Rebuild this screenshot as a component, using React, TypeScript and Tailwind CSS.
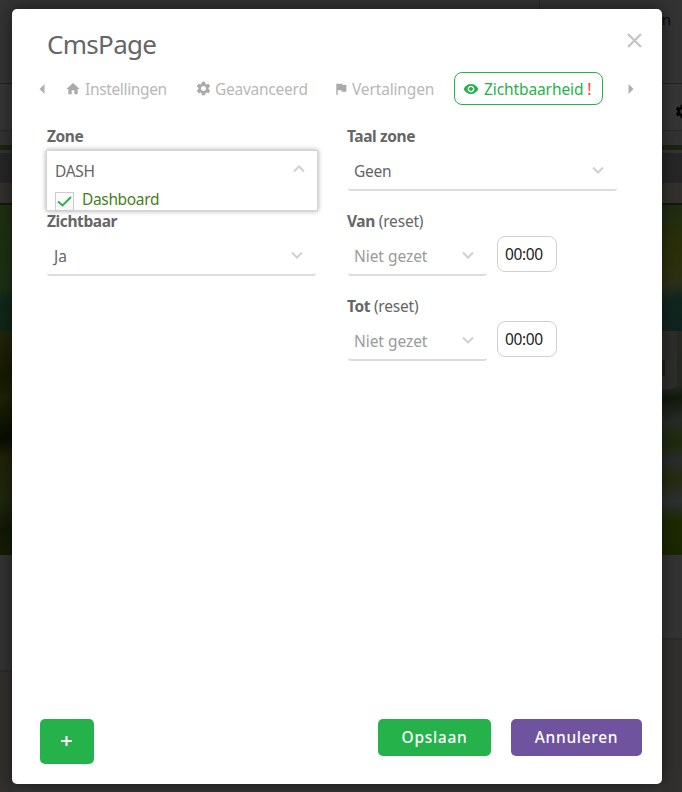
import type { ReactNode } from "react";
import { MdFlag, MdHome, MdRemoveRedEye, MdSettings } from "react-icons/md";

function Chevron({ up = false }: { up?: boolean }) {
  return (
    <svg width="12" height="8" viewBox="0 0 12 8" fill="none" stroke="#d0d0d0" strokeWidth="2">
      <path d={up ? "M1 6.5 6 1.5l5 5" : "M1 1.5l5 5 5-5"} />
    </svg>
  );
}

function Select({ className = "", children }: { className?: string; children: ReactNode }) {
  return (
    <div
      className={`flex h-[41px] items-center justify-between rounded-[3px] border-b-2 border-[#dcdcdc] pr-[13px] pl-[7px] pt-[4px] ${className}`}
    >
      <span>{children}</span>
      <span className="pb-[4px]">
        <Chevron />
      </span>
    </div>
  );
}

function Label({ children, note }: { children: ReactNode; note?: string }) {
  return (
    <div className="h-[24px] text-[15.5px] leading-[22px]">
      <b className="font-bold tracking-[-0.4px]">{children}</b>
      {note && <span className="tracking-[-0.2px]"> {note}</span>}
    </div>
  );
}

function TimeRow({ label }: { label: string }) {
  return (
    <div className="h-[85px]">
      <Label note="(reset)">{label}</Label>
      <div className="flex gap-[10px]">
        <Select className="ml-px mt-[1px] w-[139px] text-[#9b9b9b]">
          <span className="-ml-px tracking-[-0.05px]">Niet gezet</span>
        </Select>
        <div className="mt-[2px] h-9 w-[60px] rounded-lg border border-[#d0d0d0] pl-[7px] text-[15.5px] leading-[35px] tracking-[-0.35px] text-[#222]">
          00:00
        </div>
      </div>
    </div>
  );
}

function Backdrop() {
  return (
    <div className="flex h-full flex-col">
      <div className="flex h-[84px] shrink-0 border-b border-[#222]">
        <div className="w-[540px] border-r border-[#292929]" />
        <div className="flex-1 pt-[8px] pr-[11px] text-right text-[15px] text-[#080810]">n</div>
      </div>
      <div className="flex h-[47px] shrink-0 items-center justify-end overflow-hidden border-b border-[#292929] bg-[#353535]">
        <MdSettings className="mt-[9px] -mr-[9px] size-[17px] shrink-0 text-[#050505]" />
      </div>
      <div className="h-[14px] shrink-0" />
      <div className="h-[5px] shrink-0 bg-[#1b2410]" />
      <div className="h-[3px] shrink-0" />
      <div className="h-[30px] shrink-0 bg-[#262626]" />
      <div className="h-[20px] shrink-0 bg-[#32312e]" />
      <div className="h-[2px] shrink-0 bg-[#10190b]" />
      <div className="flex h-[126px] shrink-0 justify-between">
        <div className="w-3 bg-linear-[165deg,#1f3012_0%,#1c3014_67%,#10281a_74%,#0e2617_100%]" />
        <div className="w-5 bg-linear-[165deg,#1d2c16_0%,#292f0a_28%,#2c300b_45%,#2e3018_62%,#122620_74%,#10241f_100%]" />
      </div>
      <div className="flex h-[224px] shrink-0 justify-between">
        <div className="w-3 bg-linear-[170deg,#25250a_0%,#171a02_20%,#1d2205_30%,#080d03_48%,#202208_56%,#1f260d_75%,#111906_88%,#171d05_100%]" />
        <div className="flex w-5 flex-col items-start bg-linear-[175deg,#292922_0%,#242723_25%,#12190c_30%,#282a27_40%,#1e2a0b_50%,#292c2d_58%,#252b0e_66%,#2e3033_76%,#1c2900_85%,#1b2700_100%]">
          <div className="h-[58px] w-[15px] rounded-br-md bg-[#2d2d2c] pt-[29px]">
            <div className="h-4 w-[3px] bg-[#1d1d1d]" />
          </div>
        </div>
      </div>
      <div className="flex flex-1 justify-between">
        <div className="flex w-3 flex-col">
          <div className="h-[115px]" />
          <div className="flex-1 border-t-2 border-[#2b2b2c] bg-[#31302e]" />
        </div>
        <div className="flex w-5 flex-col">
          <div className="h-[83px]" />
          <div className="flex-1 border-t-2 border-[#2b2b2c] bg-[#31302e]" />
        </div>
      </div>
    </div>
  );
}

export default function App() {
  return (
    <div className="relative h-[792px] w-[682px] overflow-hidden bg-[#333] font-['Noto_Sans',sans-serif] text-[15.5px] whitespace-nowrap text-[#666]">
      <Backdrop />
      <div className="absolute inset-x-0 top-0 pt-[9px] pl-3">
        <main className="flex h-[775px] w-[650px] flex-col rounded-[5px] bg-white shadow-[0_0_16px_rgba(0,0,0,0.5)]">
          <header className="flex h-[63px] justify-between pt-[17px] pr-[20px] pl-[35px]">
            <h1 className="text-[26px] leading-[36px] tracking-[-0.7px]">CmsPage</h1>
            <svg className="mt-[7px]" width="15" height="15" viewBox="0 0 15 15" stroke="#c5c5c5" strokeWidth="2.4">
              <path d="M1 1l13 13M14 1L1 14" />
            </svg>
          </header>

          <nav className="flex h-[33px] items-center text-[#b8b8b8]">
            <svg className="ml-[27px]" width="6" height="10" viewBox="0 0 6 10" fill="#b0b0b0">
              <path d="M5.5 0v10L.5 5z" />
            </svg>
            <div className="ml-[20px] flex w-[130px] items-center">
              <MdHome className="mr-[4px] size-4 text-[#aaa]" />
              <span className="pt-[2px] tracking-[-0.35px]">Instellingen</span>
            </div>
            <div className="flex w-[138px] items-center">
              <MdSettings className="mr-[3px] size-[17px] text-[#aaa]" />
              <span className="pt-[2px] tracking-[-0.25px]">Geavanceerd</span>
            </div>
            <div className="flex w-[121px] items-center">
              <MdFlag className="mr-[3px] size-4 text-[#aaa]" />
              <span className="pt-[2px] tracking-[-0.15px]">Vertalingen</span>
            </div>
            <div className="flex h-[33px] w-[149px] items-center rounded-lg border border-[#25b24b] pl-[8px] text-[#25b24b]">
              <MdRemoveRedEye className="mr-[5px] size-4" />
              <span className="pt-[2px] tracking-[-0.1px]">
                Zichtbaarheid <span className="font-medium text-[#ff4d4d]">!</span>
              </span>
            </div>
            <svg className="ml-[25px]" width="6" height="10" viewBox="0 0 6 10" fill="#b0b0b0">
              <path d="M.5 0v10l5-5z" />
            </svg>
          </nav>

          <div className="grid flex-1 grid-cols-[300px_271px] content-start pt-[20px] pl-[35px]">
            <section>
              <div className="h-[85px]">
                <Label>Zone</Label>
                <div className="mt-[1px] -ml-px h-[61px] w-[272px] border border-[#d4d4d4] bg-white pl-[8px] shadow-[0_0_5px_rgba(0,0,0,0.35)]">
                  <div className="flex h-[38px] items-center justify-between pt-[3px] pr-[12px]">
                    <span className="tracking-[-0.3px]">DASH</span>
                    <span className="pb-[5px]">
                      <Chevron up />
                    </span>
                  </div>
                  <div className="flex h-[21px] items-center">
                    <div className="mt-[4px] flex size-[19px] items-center justify-center border border-[#ccc] bg-[#fafafa]">
                      <svg width="15" height="11" viewBox="0 0 15 11" fill="none" stroke="#25b24b" strokeWidth="1.8">
                        <path d="M1 5.5l4.5 4L14 1" />
                      </svg>
                    </div>
                    <span className="ml-[8px] tracking-[-0.35px] text-[#457f1d]">Dashboard</span>
                  </div>
                </div>
              </div>
              <Label>Zichtbaar</Label>
              <Select className="mt-[1px] w-[269px]">Ja</Select>
            </section>

            <section>
              <div className="h-[85px]">
                <Label>Taal zone</Label>
                <Select className="ml-px mt-[1px] w-[269px]">
                  <span className="-ml-px tracking-[-0.25px]">Geen</span>
                </Select>
              </div>
              <TimeRow label="Van" />
              <TimeRow label="Tot" />
            </section>
          </div>

          <footer className="flex h-[65px] items-start pr-[20px] pl-[28px] font-medium text-white">
            <button className="flex h-[45px] w-[54px] items-center justify-center rounded-[5px] bg-[#25b24b] pr-[2px] pb-[1px]">
              <svg width="11" height="10" viewBox="0 0 11 10" stroke="white" strokeWidth="2">
                <path d="M0 5h11M5.5 0v10" />
              </svg>
            </button>
            <button className="ml-auto h-[37px] w-[113px] rounded-[5px] bg-[#25b24b] tracking-[0.7px]">Opslaan</button>
            <button className="ml-[20px] h-[37px] w-[131px] rounded-[5px] bg-[#6f539e] tracking-[0.7px]">
              Annuleren
            </button>
          </footer>
        </main>
      </div>
    </div>
  );
}
